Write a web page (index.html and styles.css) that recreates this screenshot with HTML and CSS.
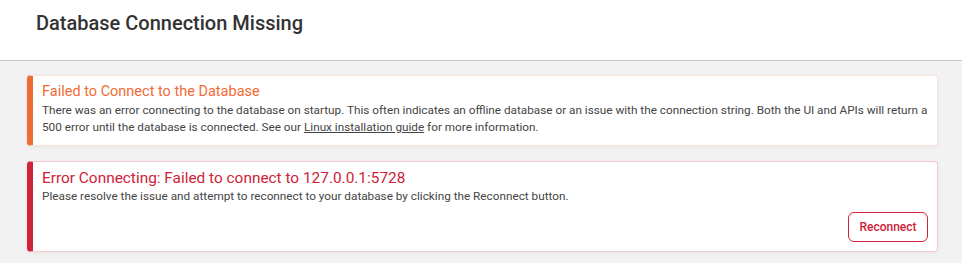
FILE: index.html
```html
<!DOCTYPE html>
<html>
	<head>
		<link rel="stylesheet" href="styles.css">
		<title>Database Connection Missing</title>
	</head>
	<body>
		<div class="header">
			<h1 class="pageTitle">Database Connection Missing</h1>
		</div>
		<div class="content">
			<div class="card warning">
				<div class="cardTitle">Failed to Connect to the Database</div>
				<div class="cardText">
					There was an error connecting to the database on startup. This often indicates an offline database or an issue with the connection string. Both the UI and APIs will return a 500 error until the database is connected. See our <a href="#">Linux installation guide</a> for more information.
				</div>
			</div>
			<div class="card error">
				<div class="cardTitle">Error Connecting: Failed to connect to 127.0.0.1:5728</div>
				<div class="cardText">
					Please resolve the issue and attempt to reconnect to your database by clicking the Reconnect button.
				</div>
				<div class="actions">
					<button class="button">Reconnect</button>
				</div>
			</div>
		</div>
	</body>
</html>
```
FILE: styles.css
```css
body {
	margin: 0;
	font-family: Roboto, "Liberation Sans", sans-serif;
	background-color: #f2f2f2;
	color: #444444;
}
.header {
	background-color: #ffffff;
	height: 60px;
	border-bottom: 1px solid #c8c8c8;
	padding-left: 36px;
}
.pageTitle {
	margin: 0;
	padding-top: 10px;
	font-size: 20px;
	line-height: 26px;
	font-weight: 500;
	color: #333333;
}
.content {
	padding: 14px 24px 10px 27px;
	display: flex;
	flex-direction: column;
	gap: 15px;
}
.card {
	background-color: #ffffff;
	border: 1px solid;
	border-left-width: 6px;
	border-radius: 4px;
	padding: 6px 9px 9px 9px;
	box-shadow: 0 1px 4px rgba(0, 0, 0, 0.06);
}
.warning {
	border-color: #fbe3dc;
	border-left-color: #f26b35;
}
.error {
	border-color: #f3c7cd;
	border-left-color: #d02238;
}
.cardTitle {
	font-size: 15px;
	line-height: 20px;
}
.warning .cardTitle {
	font-size: 14.5px;
	color: #f26b35;
}
.error .cardTitle {
	font-size: 15.4px;
	color: #d02238;
}
.cardText {
	font-size: 11.75px;
	line-height: 17px;
	color: #444444;
}
.cardText a {
	color: #444444;
	text-decoration: underline;
}
.actions {
	display: flex;
	justify-content: flex-end;
	margin-top: 7px;
}
.button {
	background-color: #ffffff;
	border: 1px solid #d02238;
	color: #d02238;
	border-radius: 6px;
	width: 80px;
	height: 30px;
	font-family: Roboto, "Liberation Sans", sans-serif;
	font-size: 12px;
	font-weight: 500;
	cursor: pointer;
}
```
